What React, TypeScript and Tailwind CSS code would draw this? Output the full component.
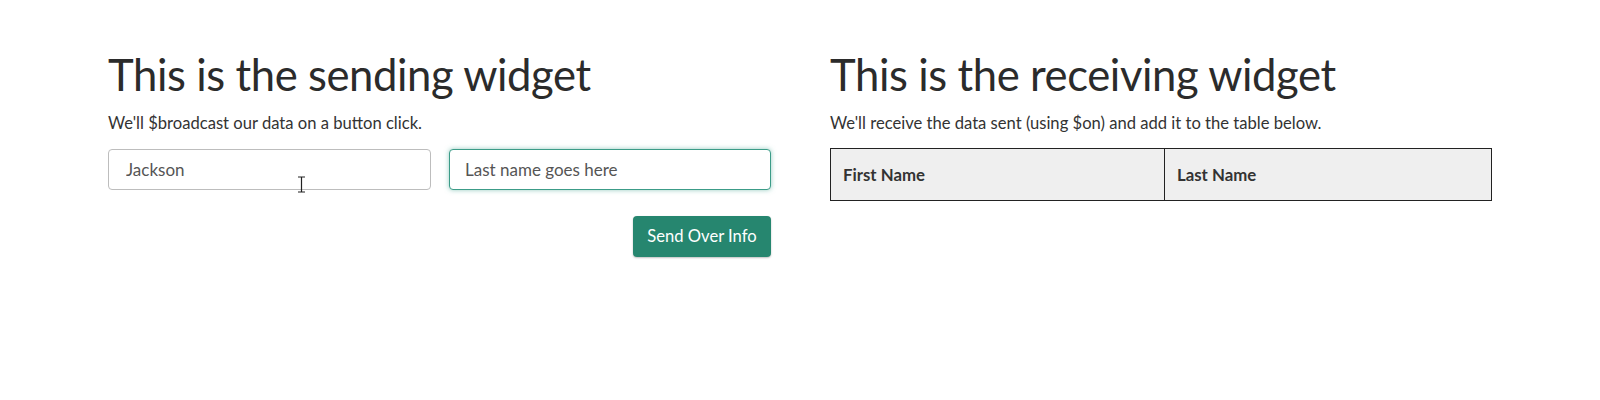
import React from 'react';

const font = { fontFamily: '"Source Sans Pro", Lato, "Liberation Sans", sans-serif' };

function IBeam() {
  return (
    <svg className="pointer-events-none absolute left-[297px] top-[176px]" width="9" height="17" viewBox="0 0 9 17" fill="none" stroke="#222" strokeWidth="1.2">
      <path d="M1 1h7M1 16h7M4.5 1v15" />
    </svg>
  );
}

export default function App() {
  return (
    <div className="relative min-h-[400px] w-full bg-white text-[#333]" style={font}>
      <div className="mx-auto flex w-[1384px] gap-[59px] pt-[46px]">
        {/* Sending side */}
        <section className="w-[663px]">
          <h1 className="text-[43.6px] font-normal leading-[56px] tracking-[-0.4px] text-[#2b2b2b]">This is the sending widget</h1>
          <p className="mt-[10px] text-[16.6px] leading-[22px]">We'll $broadcast our data on a button click.</p>
          <div className="mt-[15px] flex gap-[18px]">
            <input
              className="h-[41px] w-[323px] rounded-[4px] border border-[#bdbdbd] bg-white px-[17px] text-[17px] text-[#555] outline-none"
              defaultValue="Jackson"
            />
            <input
              className="h-[41px] w-[322px] rounded-[4px] border border-[#3c9c88] bg-white px-[15px] text-[17px] text-[#555] shadow-[0_0_5px_rgba(60,160,140,0.55)] outline-none placeholder:text-[#555]"
              placeholder="Last name goes here"
            />
          </div>
          <div className="mt-[26px] flex justify-end">
            <button className="h-[41px] w-[138px] rounded-[4px] bg-[#26866f] text-[16.6px] text-white shadow-[0_1px_2px_rgba(0,0,0,0.25)]">
              Send Over Info
            </button>
          </div>
        </section>

        {/* Receiving side */}
        <section className="w-[662px]">
          <h1 className="text-[43.6px] font-normal leading-[56px] tracking-[-0.4px] text-[#2b2b2b]">This is the receiving widget</h1>
          <p className="mt-[10px] text-[16.6px] leading-[22px]">We'll receive the data sent (using $on) and add it to the table below.</p>
          <table className="mt-[14px] w-full border-collapse border border-[#222]">
            <thead>
              <tr className="bg-[#efefef]">
                <th className="h-[52px] w-[334px] border-r border-[#222] px-[12px] text-left text-[16.8px] font-bold">First Name</th>
                <th className="h-[52px] px-[12px] text-left text-[16.8px] font-bold">Last Name</th>
              </tr>
            </thead>
          </table>
        </section>
      </div>
      <IBeam />
    </div>
  );
}
